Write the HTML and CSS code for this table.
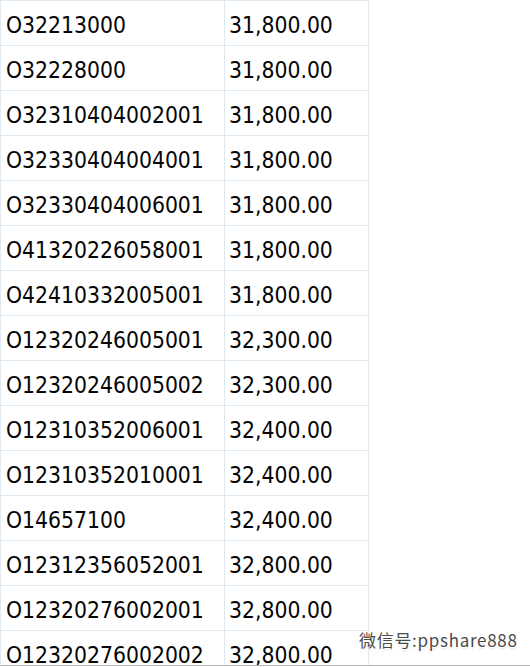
FILE: index.html
```html
<!DOCTYPE html>
<html lang="zh">
<head>
<meta charset="utf-8">
<title>Sheet</title>
<link rel="stylesheet" href="styles.css">
</head>
<body>
<div class="frame">
  <div class="sheet">
    <div class="cell">O32213000</div><div class="cell">31,800.00</div>
    <div class="cell">O32228000</div><div class="cell">31,800.00</div>
    <div class="cell">O32310404002001</div><div class="cell">31,800.00</div>
    <div class="cell">O32330404004001</div><div class="cell">31,800.00</div>
    <div class="cell">O32330404006001</div><div class="cell">31,800.00</div>
    <div class="cell">O41320226058001</div><div class="cell">31,800.00</div>
    <div class="cell">O42410332005001</div><div class="cell">31,800.00</div>
    <div class="cell">O12320246005001</div><div class="cell">32,300.00</div>
    <div class="cell">O12320246005002</div><div class="cell">32,300.00</div>
    <div class="cell">O12310352006001</div><div class="cell">32,400.00</div>
    <div class="cell">O12310352010001</div><div class="cell">32,400.00</div>
    <div class="cell">O14657100</div><div class="cell">32,400.00</div>
    <div class="cell">O12312356052001</div><div class="cell">32,800.00</div>
    <div class="cell">O12320276002001</div><div class="cell">32,800.00</div>
    <div class="cell">O12320276002002</div><div class="cell">32,800.00</div>
  </div>
  <div class="watermark">微信号:ppshare888</div>
</div>
</body>
</html>
```

FILE: styles.css
```css
html, body {
  margin: 0;
  padding: 0;
  background: #ffffff;
}

.frame {
  position: relative;
  width: 530px;
  height: 665px;
  overflow: hidden;
  border-bottom: 1px solid #b4b4b4;
}

.sheet {
  display: grid;
  grid-template-columns: 224px 144px;
  width: max-content;
  border-top: 1px solid #e2eaf1;
  border-left: 1px solid #e2eaf1;
}

.cell {
  box-sizing: border-box;
  height: 45px;
  padding: 4px 0 0 4px;
  line-height: 40px;
  border-right: 1px solid #dfe8f0;
  border-bottom: 1px solid #dfe8f0;
  font-family: "DejaVu Sans Condensed", "DejaVu Sans", sans-serif;
  font-stretch: condensed;
  font-size: 22.7px;
  color: #050505;
  white-space: nowrap;
}

.cell:nth-child(2n+1) {
  padding-left: 5px;
}

.watermark {
  position: absolute;
  left: 359px;
  top: 629px;
  font-family: "Noto Sans CJK SC", "DejaVu Sans", sans-serif;
  font-size: 17px;
  line-height: 22px;
  color: #4a4a4a;
  letter-spacing: 0.7px;
  text-shadow: 1px 1px 0 #fff, -1px -1px 0 #fff, 1px -1px 0 #fff, -1px 1px 0 #fff, 0 2px 2px rgba(0,0,0,0.12);
  white-space: nowrap;
}
```
